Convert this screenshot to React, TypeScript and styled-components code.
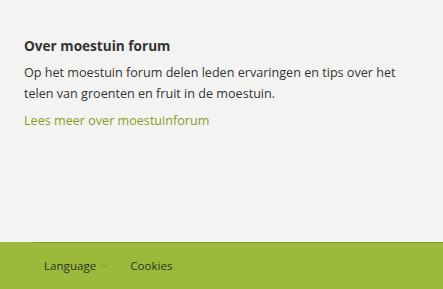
import React from "react";
import styled, { createGlobalStyle } from "styled-components";

const Global = createGlobalStyle`
  html, body { margin: 0; padding: 0; }
  body { background: #f3f4f2; font-family: "Open Sans", "Liberation Sans", sans-serif; color: #333; }
`;

const Page = styled.div`
  display: flex;
  flex-direction: column;
  height: 289px;
  overflow: hidden;
`;

const Main = styled.main`
  height: 242px;
  box-sizing: border-box;
  padding: 36px 24px 0 24px;
  background: #f3f4f2;
`;

const Title = styled.h2`
  margin: 0 0 6px 0;
  font-size: 13.6px;
  line-height: 20px;
  font-weight: 700;
  color: #333;
`;

const Text = styled.p`
  margin: 0 0 4px 0;
  font-size: 12.6px;
  line-height: 21px;
  color: #333;
`;

const MoreLink = styled.a`
  font-size: 12.6px;
  line-height: 21px;
  color: #8a9b26;
  text-decoration: none;
`;

const Footer = styled.footer`
  position: relative;
  flex: 1;
  background: #9cb93b;
  display: flex;
  align-items: center;
  gap: 22px;
  padding: 0 0 0 44px;
  &::before {
    content: "";
    position: absolute;
    top: 0;
    left: 33px;
    right: 0;
    height: 1px;
    background: #7f9a2c;
  }
`;

const FooterItem = styled.span`
  font-size: 11.6px;
  color: #2f3320;
  display: inline-flex;
  align-items: center;
  gap: 4px;
`;

export default function App() {
  return (
    <Page>
      <Global />
      <Main>
        <Title>Over moestuin forum</Title>
        <Text>
          Op het moestuin forum delen leden ervaringen en tips over het telen van groenten en fruit in de moestuin.
        </Text>
        <MoreLink href="#">Lees meer over moestuinforum</MoreLink>
      </Main>
      <Footer>
        <FooterItem>
          Language
          <svg width="8" height="6" viewBox="0 0 8 6">
            <path d="M1 1.5 L4 4.5 L7 1.5" fill="none" stroke="#6f8a2a" strokeWidth="1" />
          </svg>
        </FooterItem>
        <FooterItem>Cookies</FooterItem>
      </Footer>
    </Page>
  );
}
